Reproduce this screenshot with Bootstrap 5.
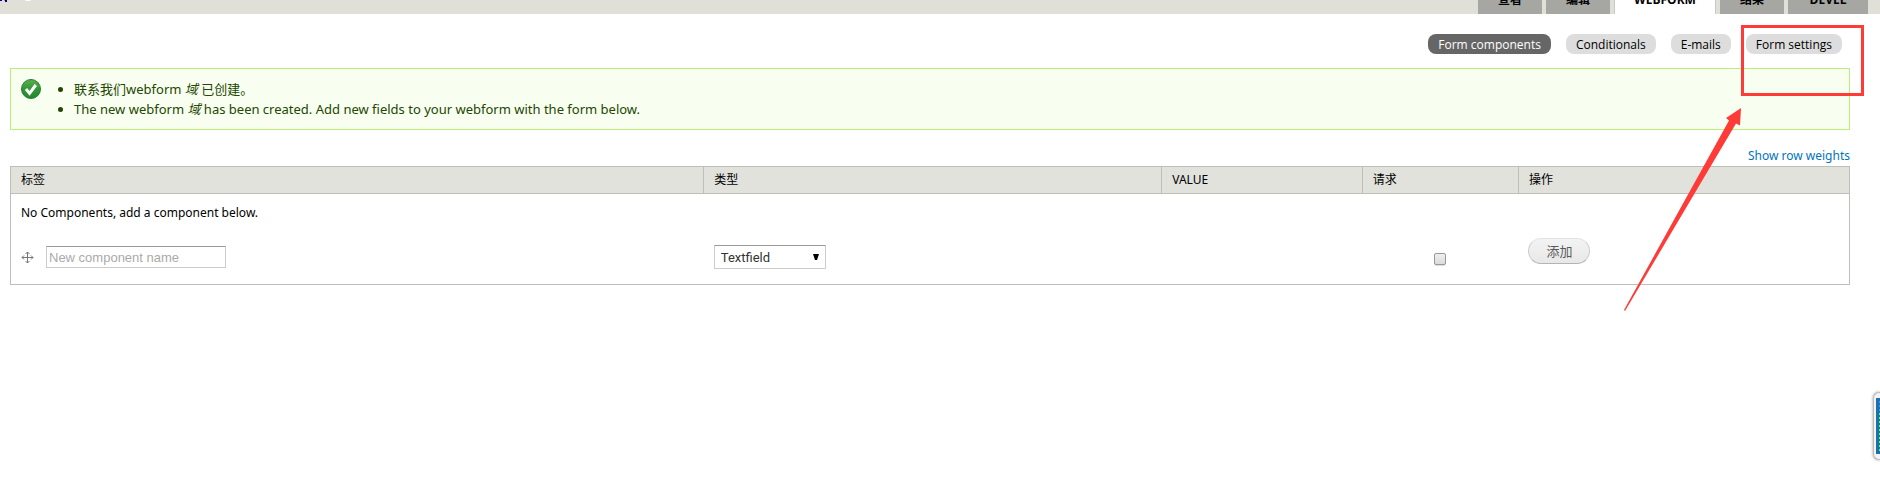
<!DOCTYPE html>
<html lang="zh-CN">
<head>
<meta charset="utf-8">
<meta name="viewport" content="width=device-width, initial-scale=1">
<title>Webform</title>
<link href="https://cdn.jsdelivr.net/npm/bootstrap@5.3.0/dist/css/bootstrap.min.css" rel="stylesheet">
<style>
body{font:12px/20px "Noto Sans","Noto Sans CJK SC",sans-serif;color:#000;background:#fff}
a{text-decoration:none}
/* Branding band with the primary tabs */
.branding{height:14px;background:#e0e0d8}
.primary-tabs{gap:4px;padding-right:12px;margin-top:-14px;font-family:"Open Sans","Noto Sans CJK SC",sans-serif}
.primary-tabs .nav-link{height:28px;width:64px;padding:0;background:#a6a7a2;color:#000;font-weight:700;text-align:center;line-height:28px}
.primary-tabs .nav-link.wide{width:80px}
.primary-tabs .nav-link.active{width:102px;background:#fff;border:solid #c9cac4;border-width:0 1px}
.page-main{padding:0 30px 0 10px}
/* Secondary tabs */
.secondary-tabs{gap:15px;padding:20px 8px 14px 0;font-family:"Open Sans",sans-serif}
.secondary-tabs .nav-link{height:20px;line-height:22px;padding:0 10px;border-radius:8px;background:#ddd;color:#000}
.secondary-tabs .nav-link.active{background:#666;color:#fff;font-weight:500}
/* Status message */
.status-box{border:1px solid #be7;background:#f8fff0;color:#234600;padding:10px;gap:10px;margin-bottom:16px;font-size:13px}
.status-box ul{padding-left:23px}
.weights{color:#0074bd}
/* Components table */
.components{border:1px solid #bebfb9;table-layout:fixed;color:#000;line-height:20px}
.components>:not(caption)>*>*{border:0;padding:9px 10px 11px;background:none;box-shadow:none}
.components>thead>tr>th{background:#e1e2dc;font-weight:400;padding:3px 10px;border-bottom:1px solid #bebfb9;text-transform:uppercase}
.components>thead>tr>th+th{border-left:1px solid #bebfb9}
.components>tbody>.new-item>td{padding:4px 10px 0;height:50px;vertical-align:top}
.field-wrap{height:38px}
.name-box,.type-box{border:1px solid #ccc;border-top-color:#999;border-radius:0;background-color:#fff}
.name-box{width:180px;height:22px;padding:1px 2px;font:13px "Liberation Sans",sans-serif}
.name-box::placeholder{color:#aaa;opacity:1}
.type-box{width:112px;height:24px;padding:0 6px;font:13px Roboto,sans-serif;color:#333;appearance:none;background-repeat:no-repeat;background-position:right 6px center;background-image:url("data:image/svg+xml,%3Csvg xmlns='http://www.w3.org/2000/svg' width='6' height='6'%3E%3Cpath d='M0 0h6L4 6H2z'/%3E%3C/svg%3E")}
.need-box{appearance:none;width:12px;height:12px;border:1px solid #999;border-radius:2px;background:linear-gradient(#eee,#dcdcdc);box-shadow:0 1px 1px #ddd}
.add-btn{height:26px;width:62px;padding:0;border:1px solid #e4e4e4;border-bottom-color:#b4b4b4;border-left-color:#cdcdcd;border-right-color:#cdcdcd;border-radius:13px;background:linear-gradient(#f3f3f3,#e8e8e8);color:#5a5a5a;font-size:13px;line-height:22px}
/* Callout over the page */
.callout-box{top:25px;right:16px;width:123px;height:71px;border:3px solid #ff3b38;pointer-events:none}
.callout-arrow{top:108px;right:139px;pointer-events:none}
.side-tab{top:392px;right:0;width:7px;height:68px;border:1px solid #bbb;border-right:0;border-radius:6px 0 0 6px;background:#f3f3f3;box-shadow:0 0 3px #999;padding:5px 0 5px 2px}
</style>
</head>
<body class="position-relative min-vh-100">
<header class="branding d-flex justify-content-between">
<svg width="40" height="3" aria-hidden="true"><path d="M0 0h2v1H0zM5 0h2v2H5z" fill="#008"/><path d="M4 0h1v1H4z" fill="#c84"/><path d="M25 0h6l-1 1h-4z" fill="#fff"/></svg>
<nav class="nav primary-tabs"><a class="nav-link" href="#">查看</a><a class="nav-link" href="#">编辑</a><a class="nav-link active" href="#">WEBFORM</a><a class="nav-link" href="#">结果</a><a class="nav-link wide" href="#">DEVEL</a></nav>
</header>
<main class="page-main">
<nav class="nav secondary-tabs justify-content-end"><a class="nav-link active" href="#">Form components</a><a class="nav-link" href="#">Conditionals</a><a class="nav-link" href="#">E-mails</a><a class="nav-link" href="#">Form settings</a></nav>
<div class="status-box d-flex align-items-start">
<svg width="20" height="20" viewBox="0 0 20 20" aria-hidden="true"><defs><linearGradient id="ok" x1="0" y1="0" x2="0" y2="1"><stop offset="0" stop-color="#5cb04e"/><stop offset=".5" stop-color="#2f9638"/><stop offset="1" stop-color="#1f8a2c"/></linearGradient></defs><circle cx="10" cy="10" r="9.5" fill="url(#ok)" stroke="#2b7a34"/><path d="M5 10l3.6 4.4L14.8 6" fill="none" stroke="#fff" stroke-width="3"/></svg>
<ul class="mb-0"><li>联系我们webform <em>域</em> 已创建。</li><li>The new webform <em>域</em> has been created. Add new fields to your webform with the form below.</li></ul>
</div>
<div class="text-end"><a class="weights" href="#">Show row weights</a></div>
<table class="table components mb-0">
<colgroup><col style="width:37.7%"><col style="width:24.9%"><col style="width:10.9%"><col style="width:8.5%"><col></colgroup>
<thead><tr><th>标签</th><th>类型</th><th>Value</th><th>请求</th><th>操作</th></tr></thead>
<tbody>
<tr><td colspan="5">No Components, add a component below.</td></tr>
<tr class="new-item">
<td><div class="field-wrap d-flex align-items-center"><svg class="me-2" width="13" height="13" viewBox="0 0 13 13" fill="none" stroke="#777" aria-hidden="true"><path d="M6.5 1v11M1 6.5h11M4.500 3l2-2 2 2M4.500 10l2 2 2-2M3 4.500l-2 2 2 2M10 4.500l2 2-2 2"/></svg><input class="name-box ms-1" type="text" placeholder="New component name" aria-label="New component name"></div></td>
<td><div class="field-wrap d-flex align-items-center"><select class="type-box" aria-label="类型"><option>Textfield</option></select></div></td>
<td></td>
<td><div class="field-wrap d-flex align-items-center justify-content-center pt-1"><input class="need-box" type="checkbox" aria-label="请求"></div></td>
<td><button class="add-btn d-block" type="button">添加</button></td>
</tr>
</tbody>
</table>
</main>
<div class="callout-box position-absolute"></div>
<svg class="callout-arrow position-absolute" width="117" height="203" viewBox="0 0 117 203" aria-hidden="true"><path d="M117 0L102 10l3 2.500L0 202l1 1L112 15.500l4 2z" fill="#ff3b38"/></svg>
<aside class="side-tab position-absolute"><svg class="d-block" width="4" height="56" aria-hidden="true"><path d="M0 0h4v56H0z" fill="#1c70b0"/><path d="M3.500 3v12" stroke="#3d9ae0" stroke-dasharray="2 2"/><path d="M3.500 15v38" stroke="#6f3" stroke-dasharray="2 2"/></svg></aside>
<script src="https://cdn.jsdelivr.net/npm/bootstrap@5.3.0/dist/js/bootstrap.bundle.min.js"></script>
</body>
</html>
